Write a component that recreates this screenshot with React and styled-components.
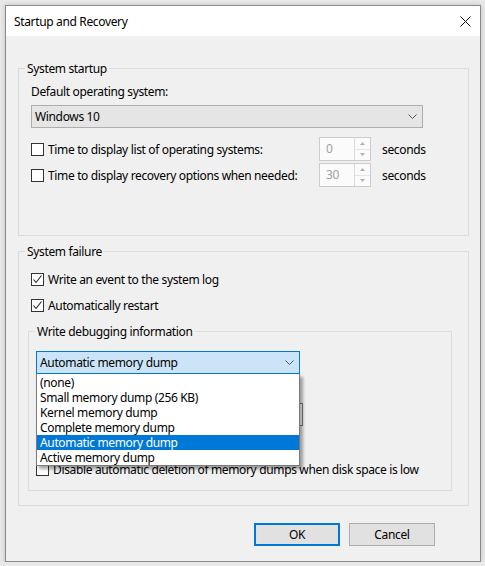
import React from "react";
import styled, { createGlobalStyle } from "styled-components";

const GlobalStyle = createGlobalStyle`
  html, body {
    margin: 0;
    padding: 0;
    background: #e9e9e9;
  }
  body {
    font-family: "Segoe UI", "Noto Sans", sans-serif;
    font-size: 12px;
    letter-spacing: -0.35px;
    color: #000;
  }
`;

const Window = styled.div`
  box-sizing: border-box;
  margin: 5px 0 0 5px;
  width: 476px;
  height: 557px;
  background: #f0f0f0;
  border: 1px solid #8a8a8a;
  box-shadow: 0 0 5px rgba(0, 0, 0, 0.18);
  display: flex;
  flex-direction: column;
`;

const TitleBar = styled.div`
  height: 30px;
  background: #fff;
  display: flex;
  align-items: center;
  justify-content: space-between;
  padding: 0 9px 0 8px;
  flex-shrink: 0;
`;

const Body = styled.div`
  padding: 25px 11px 0 12px;
  display: flex;
  flex-direction: column;
`;

const Group = styled.fieldset`
  margin: ${(p) => p.$top || 0}px 0 0 0;
  padding: ${(p) => p.$pad};
  border: 1px solid #dcdcdc;
  min-width: 0;
  display: flex;
  flex-direction: column;
  position: relative;
`;

const Legend = styled.legend`
  padding: 0 2px;
  margin-left: ${(p) => p.$shift || 0}px;
  line-height: 15px;
`;

const Label = styled.div`
  line-height: 15px;
  margin-top: ${(p) => p.$top || 0}px;
`;

const Select = styled.div`
  box-sizing: border-box;
  width: ${(p) => p.$w}px;
  height: 23px;
  margin-top: ${(p) => p.$top || 0}px;
  display: flex;
  align-items: center;
  justify-content: space-between;
  padding: 0 5px 0 3px;
  background: ${(p) => (p.$focus ? "#cce4f7" : "#e5e5e5")};
  border: 1px solid ${(p) => (p.$focus ? "#0078d7" : "#adadad")};
`;

const SelectWrap = styled.div`
  position: relative;
  margin-top: ${(p) => p.$top || 0}px;
  width: ${(p) => p.$w}px;
  z-index: 2;
`;

const List = styled.ul`
  position: absolute;
  top: 100%;
  left: 0;
  right: 0;
  margin: 0;
  padding: 1px 0 0;
  list-style: none;
  background: #fff;
  border: 1px solid #7a7a7a;
  border-top: none;
  box-shadow: 3px 3px 3px rgba(0, 0, 0, 0.35);
`;

const Item = styled.li`
  height: 15px;
  line-height: 15px;
  padding-left: 3px;
  background: ${(p) => (p.$active ? "#0078d7" : "transparent")};
  color: ${(p) => (p.$active ? "#fff" : "#000")};
`;

const SpinRow = styled.div`
  display: grid;
  grid-template-columns: 288px 52px auto;
  align-items: center;
  margin-top: ${(p) => p.$top || 0}px;
`;

const Unit = styled.span`
  padding-left: 11px;
`;

const CheckRow = styled.label`
  display: flex;
  align-items: center;
  gap: 4px;
  height: 17px;
  margin-top: ${(p) => p.$top || 0}px;
  padding-left: ${(p) => p.$indent || 0}px;
  white-space: nowrap;
`;

const Box = styled.span`
  box-sizing: border-box;
  width: 13px;
  height: 13px;
  border: 1px solid #333;
  background: #fff;
  display: inline-flex;
  align-items: center;
  justify-content: center;
  flex-shrink: 0;
`;

const Spinner = styled.div`
  box-sizing: border-box;
  height: 24px;
  display: flex;
  border: 1px solid #cccccc;
  background: #fbfbfb;
`;

const SpinValue = styled.div`
  flex: 1;
  padding-left: 6px;
  line-height: 22px;
  color: #a0a0a0;
`;

const SpinArrows = styled.div`
  width: 15px;
  border-left: 1px solid #dadada;
  display: flex;
  flex-direction: column;
`;

const SpinHalf = styled.div`
  flex: 1;
  display: flex;
  align-items: center;
  justify-content: center;
  border-top: ${(p) => (p.$lower ? "1px solid #e6e6e6" : "none")};
`;

const TextField = styled.div`
  box-sizing: border-box;
  width: 267px;
  height: 23px;
  margin-top: ${(p) => p.$top || 0}px;
  border: 1px solid #7a7a7a;
  background: #fff;
`;

const Buttons = styled.div`
  display: flex;
  justify-content: flex-end;
  gap: 9px;
  margin-top: 17px;
  padding-right: 34px;
`;

const Button = styled.button`
  box-sizing: border-box;
  width: 86px;
  height: 23px;
  font: inherit;
  letter-spacing: inherit;
  color: #000;
  background: #e1e1e1;
  border: ${(p) => (p.$primary ? "2px solid #0078d7" : "1px solid #adadad")};
  padding: 0;
`;

const Chevron = () => (
  <svg width="9" height="5" viewBox="0 0 9 5">
    <polyline points="0.5,0.5 4.5,4.5 8.5,0.5" fill="none" stroke="#555" strokeWidth="1" />
  </svg>
);

const Check = () => (
  <svg width="11" height="11" viewBox="0 0 11 11">
    <polyline points="1.5,5.5 4,8.5 9.5,1.5" fill="none" stroke="#222" strokeWidth="1.1" />
  </svg>
);

const Close = () => (
  <svg width="11" height="11" viewBox="0 0 11 11">
    <path d="M0.5 0.5 L10.5 10.5 M10.5 0.5 L0.5 10.5" stroke="#111" strokeWidth="1" />
  </svg>
);

const Arrow = ({ down }) => (
  <svg width="5" height="3" viewBox="0 0 5 3">
    <polygon points={down ? "0,0 5,0 2.5,3" : "0,3 5,3 2.5,0"} fill="#b0b0b0" />
  </svg>
);

const CheckBox = ({ checked, children, ...rest }) => (
  <CheckRow {...rest}>
    <Box>{checked && <Check />}</Box>
    <span>{children}</span>
  </CheckRow>
);

const Spin = ({ value }) => (
  <Spinner>
    <SpinValue>{value}</SpinValue>
    <SpinArrows>
      <SpinHalf>
        <Arrow />
      </SpinHalf>
      <SpinHalf $lower>
        <Arrow down />
      </SpinHalf>
    </SpinArrows>
  </Spinner>
);

const dumpTypes = [
  "(none)",
  "Small memory dump (256 KB)",
  "Kernel memory dump",
  "Complete memory dump",
  "Automatic memory dump",
  "Active memory dump",
];

export default function App() {
  return (
    <>
      <GlobalStyle />
      <Window>
        <TitleBar>
          <span>Startup and Recovery</span>
          <Close />
        </TitleBar>
        <Body>
          <Group $pad="8px 12px 48px 12px">
            <Legend $shift={-6}>System startup</Legend>
            <Label>Default operating system:</Label>
            <Select $w={392} $top={6}>
              <span>Windows 10</span>
              <Chevron />
            </Select>
            <SpinRow $top={9}>
              <CheckBox>Time to display list of operating systems:</CheckBox>
              <Spin value="0" />
              <Unit>seconds</Unit>
            </SpinRow>
            <SpinRow $top={2}>
              <CheckBox>Time to display recovery options when needed:</CheckBox>
              <Spin value="30" />
              <Unit>seconds</Unit>
            </SpinRow>
          </Group>

          <Group $top={8} $pad="12px 16px 14px 9px">
            <Legend $shift={-3}>System failure</Legend>
            <CheckBox checked $indent={3}>
              Write an event to the system log
            </CheckBox>
            <CheckBox checked $indent={3} $top={9}>
              Automatically restart
            </CheckBox>

            <Group $top={10} $pad="12px 7px 12px 7px">
              <Legend $shift={-1}>Write debugging information</Legend>
              <SelectWrap $w={264}>
                <Select $w={264} $focus>
                  <span>Automatic memory dump</span>
                  <Chevron />
                </Select>
                <List>
                  {dumpTypes.map((t) => (
                    <Item key={t} $active={t === "Automatic memory dump"}>
                      {t}
                    </Item>
                  ))}
                </List>
              </SelectWrap>
              {/* dump file path field, mostly hidden under the open list */}
              <TextField $top={29} />
              <CheckBox $top={35}>
                Disable automatic deletion of memory dumps when disk space is low
              </CheckBox>
            </Group>
          </Group>

          <Buttons>
            <Button $primary>OK</Button>
            <Button>Cancel</Button>
          </Buttons>
        </Body>
      </Window>
    </>
  );
}
